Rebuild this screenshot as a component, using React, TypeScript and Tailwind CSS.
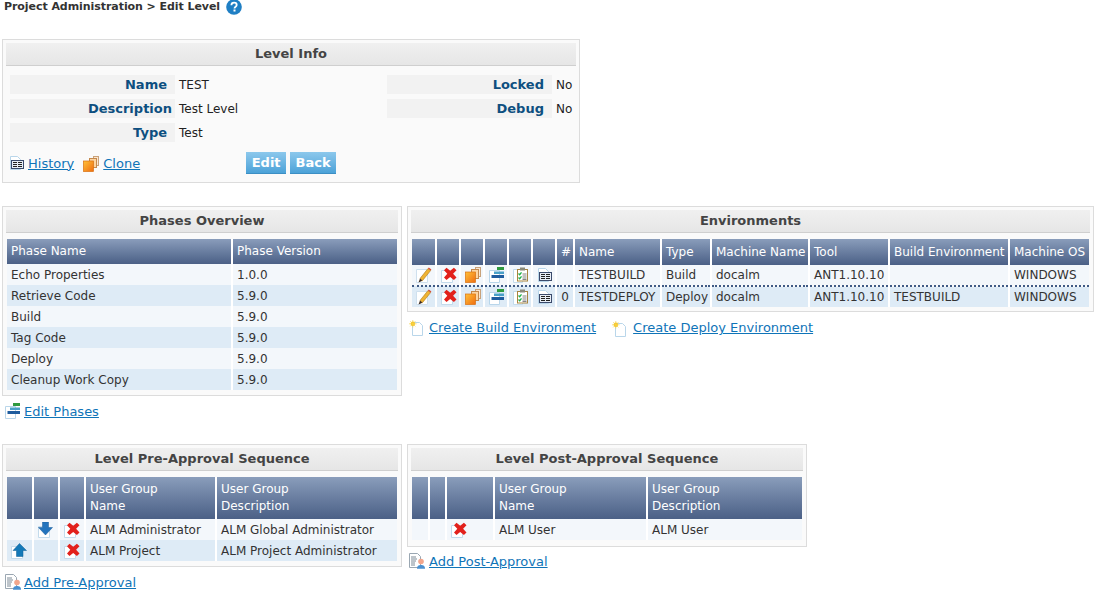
import React from "react";

const I = ({ children, w = 16, h = 16 }: { children: React.ReactNode; w?: number; h?: number }) => (
  <svg width={w} height={h} viewBox="0 0 16 16" className="inline-block shrink-0">{children}</svg>
);

const Help = () => (
  <svg width="16" height="16" viewBox="0 0 16 16" className="shrink-0">
    <circle cx="8" cy="8" r="7.8" fill="#1f7fc4" />
    <path d="M5.4 6.200c0-1.600 1.200-2.500 2.700-2.500s2.600.9 2.600 2.200c0 1.900-2.200 1.900-2.200 3.600" fill="none" stroke="#fff" strokeWidth="1.800" />
    <rect x="7.500" y="10.500" width="2" height="2" fill="#fff" />
  </svg>
);
const Book = () => (
  <I>
    <path d="M1.500 1.500h7l3 3v10h-10z" fill="#fff" stroke="#b9d6ea" />
    <rect x="2.500" y="5.500" width="12" height="8" fill="#e8eef6" stroke="#3b4a6b" />
    <rect x="4" y="7" width="4" height="5" fill="#222" />
    <rect x="9" y="7" width="4" height="5" fill="#222" />
    <path d="M4 8.500h4M4 10.500h4M9 8.500h4M9 10.500h4" stroke="#e8eef6" />
  </I>
);
const Clone = () => (
  <I>
    <rect x="10.500" y="0.500" width="5" height="9" fill="#fbe6d0" stroke="#c9a27a" />
    <rect x="6.500" y="2.500" width="7" height="9" fill="#fcd5a3" stroke="#c4894d" />
    <defs><linearGradient id="og" x1="0" y1="0" x2="1" y2="1"><stop offset="0" stopColor="#ffc23a" /><stop offset="1" stopColor="#ef6c10" /></linearGradient></defs>
    <rect x="0.500" y="5" width="10" height="10.500" fill="url(#og)" stroke="#d9700f" strokeWidth=".7" />
  </I>
);
const Pencil = () => (
  <I>
    <path d="M.5 2.500h11v13h-11z" fill="#fff" stroke="#cfe0ee" />
    <path d="M4 11.500L12 1.500l2.600 2.100L6.400 13.700z" fill="#f0b433" stroke="#a9771a" strokeWidth=".6" />
    <path d="M12 1.500l.8-1 2.600 2.100-.8 1z" fill="#d84a3a" />
    <path d="M4 11.500l-1.500 4 3.900-1.800z" fill="#3b2a20" />
  </I>
);
const Cross = () => (
  <I>
    <path d="M.5 3.500h9l2 2v10h-11z" fill="#fff" stroke="#c3dbec" />
    <path d="M5.500 .8l3.700 3 3.700-3 2.600 2.400-3.400 3.600 3.400 3.800-2.600 2.500-3.700-3.200-3.700 3.200-2.500-2.500 3.300-3.800-3.300-3.600z" fill="#e2211c" />
  </I>
);
const Phases = () => (
  <I>
    <path d="M.5 3.500h10v12h-10z" fill="#fff" stroke="#b9d6ea" />
    <rect x="8" y="0" width="7" height="3" fill="#2f9a3f" />
    <rect x="5" y="4.500" width="10" height="2.500" fill="#4aa0c8" />
    <rect x="2.500" y="8" width="12.500" height="3" fill="#1f5c9e" />
  </I>
);
const Clip = () => (
  <I>
    <path d="M.5 2.500h9v13h-9z" fill="#fff" stroke="#c3dbec" />
    <rect x="4.500" y="2.500" width="10" height="11.500" fill="#fff" stroke="#a8853f" />
    <rect x="7" y="0.500" width="5" height="3" fill="#8a8a7a" />
    <path d="M5.500 6.500l1.200 1.200 1.800-2.400M5.500 10.500l1.200 1.200 1.800-2.400" fill="none" stroke="#22b14c" strokeWidth="1.300" />
    <path d="M9.500 7h4M9.500 9h4M9.500 11h4M9.500 12.500h4" stroke="#666" strokeWidth=".8" />
  </I>
);
const NewDoc = () => (
  <I>
    <path d="M3.500 2.500h7l3 3v10h-10z" fill="#fff" stroke="#b9d6ea" />
    <circle cx="3.800" cy="3.800" r="2.200" fill="#f7c21a" />
    <path d="M3.800 0v7.600M0 3.800h7.600M1.200 1.200l5.200 5.200M6.400 1.200l-5.200 5.200" stroke="#f7d34a" strokeWidth=".7" />
  </I>
);
const Down = () => (
  <I>
    <path d="M.5 4.500h9l2 2v9h-11z" fill="#fff" stroke="#c3dbec" />
    <path d="M4.500 0h6v5.500h4l-7 7.500-7-7.500h4z" fill="#2273bd" stroke="#1b5c99" strokeWidth=".5" />
  </I>
);
const Up = () => (
  <I>
    <path d="M.5 3.500h9l2 2v10h-11z" fill="#fff" stroke="#c3dbec" />
    <path d="M8.500 .5l7 7h-3.500v6H5.500v-6H2z" fill="#1379b8" stroke="#0f5f95" strokeWidth=".5" />
  </I>
);
const AddUser = () => (
  <I>
    <path d="M.5 .5h8l3 3v11h-11z" fill="#fff" stroke="#9aa7b2" />
    <path d="M2 4h5M2 6h6M2 8h5M2 10h4M2 12h4" stroke="#7d8a96" />
    <circle cx="12" cy="8.500" r="2.800" fill="#f2a68c" />
    <path d="M8 15.800c0-3.300 2-3.800 4-3.800s4 .5 4 3.800z" fill="#4a90d0" />
  </I>
);

const Link = ({ children }: { children: React.ReactNode }) => (
  <a className="text-[13px] leading-[15px] text-[#0f74b8] underline cursor-pointer whitespace-nowrap">{children}</a>
);

const Panel = ({ title, w, children }: { title: string; w: string; children: React.ReactNode }) => (
  <div className={`${w} border border-[#dcdcdc] bg-[#fafafa] p-[3px] shrink-0`}>
    <div className="h-[23px] flex items-center justify-center bg-gradient-to-b from-[#f0f0f0] to-[#e6e6e6] border-b border-[#cfcfcf] text-[13px] font-bold text-[#444]">
      {title}
    </div>
    {children}
  </div>
);

const Th = ({ children, cls = "" }: { children?: React.ReactNode; cls?: string }) => (
  <th className={`border-r-2 last:border-r-0 border-white bg-gradient-to-b from-[#8a9dbb] to-[#4b6086] text-white font-normal text-left align-middle px-1 leading-[17px] text-[12px] ${cls}`}>{children}</th>
);
const Td = ({ children, cls = "" }: { children?: React.ReactNode; cls?: string }) => (
  <td className={`border-r-2 last:border-r-0 border-white px-1 text-[12px] text-[#333] whitespace-nowrap overflow-hidden ${cls}`}>{children}</td>
);
const IconTd = ({ children }: { children?: React.ReactNode }) => (
  <td className="border-r-2 border-white align-middle p-0">
    <span className="flex items-center pl-[4px]">{children}</span>
  </td>
);

const Table = ({ cols, children, w }: { cols: number[]; children: React.ReactNode; w: string }) => (
  <table className={`table-fixed border-collapse ${w}`}>
    <colgroup>{cols.map((c, i) => <col key={i} style={{ width: c }} />)}</colgroup>
    {children}
  </table>
);

const Info = ({ label, value, pr = "pr-[8px]" }: { label: string; value: string; pr?: string }) => (
  <div className="flex h-[19px] items-center">
    <div className={`w-[165px] h-full bg-[#f2f2f2] text-right ${pr} text-[13px] leading-[19px] font-bold text-[#0d4f80]`}>{label}</div>
    <div className="pl-[4px] text-[12px] text-[#222]">{value}</div>
  </div>
);

const phases = [
  ["Echo Properties", "1.0.0"],
  ["Retrieve Code", "5.9.0"],
  ["Build", "5.9.0"],
  ["Tag Code", "5.9.0"],
  ["Deploy", "5.9.0"],
  ["Cleanup Work Copy", "5.9.0"],
];
const envs = [
  ["", "TESTBUILD", "Build", "docalm", "ANT1.10.10", "", "WINDOWS"],
  ["0", "TESTDEPLOY", "Deploy", "docalm", "ANT1.10.10", "TESTBUILD", "WINDOWS"],
];

export default function App() {
  return (
    <div className="w-[1099px] h-[599px] overflow-hidden bg-white text-[12px] text-[#333]" style={{ fontFamily: '"DejaVu Sans", Verdana, sans-serif' }}>
      <div className="flex items-center h-[14px] pl-[4px] gap-[6px] text-[11px] font-bold text-[#333]">
        <span className="tracking-[-0.06px]">Project Administration &gt; Edit Level</span>
        <Help />
      </div>

      <div className="mt-[25px] ml-[2px]">
        <Panel title="Level Info" w="w-[578px]">
          <div className="flex mt-[9px] pl-[4px]">
            <div className="w-[377px] flex flex-col gap-[5px]">
              <Info label="Name" value="TEST" />
              <Info label="Description" value="Test Level" pr="pr-[3px]" />
              <Info label="Type" value="Test" />
            </div>
            <div className="flex flex-col gap-[5px]">
              <Info label="Locked" value="No" />
              <Info label="Debug" value="No" />
            </div>
          </div>
          <div className="flex items-center h-[22px] mt-[10px] mb-[5px] pl-[3px]">
            <Book />
            <span className="ml-[3px] mt-[1px]"><Link>History</Link></span>
            <span className="ml-[9px]"><Clone /></span>
            <span className="ml-[4px] mt-[1px]"><Link>Clone</Link></span>
            <div className="flex gap-[4px] ml-[106px]">
              <button className="w-[40px] h-[22px] bg-gradient-to-b from-[#8cc8ec] to-[#4ba2d8] border-b border-[#3c8fc4] text-white font-bold text-[13px]">Edit</button>
              <button className="w-[46px] h-[22px] bg-gradient-to-b from-[#8cc8ec] to-[#4ba2d8] border-b border-[#3c8fc4] text-white font-bold text-[13px]">Back</button>
            </div>
          </div>
        </Panel>
      </div>

      <div className="flex gap-[5px] ml-[2px] mt-[23px] items-start">
        <div className="w-[400px] shrink-0">
          <Panel title="Phases Overview" w="w-[400px]">
            <div className="mt-[6px] px-px pb-[2px]">
              <Table cols={[225, 165]} w="w-[390px]">
                <thead><tr className="h-[25px]"><Th>Phase Name</Th><Th>Phase Version</Th></tr></thead>
                <tbody>
                  {phases.map((p, i) => (
                    <tr key={p[0]} className={`h-[21px] ${i % 2 ? "bg-[#deebf6]" : "bg-[#f3f7fb]"}`}><Td>{p[0]}</Td><Td>{p[1]}</Td></tr>
                  ))}
                </tbody>
              </Table>
            </div>
          </Panel>
          <div className="flex items-center gap-[3px] mt-[7px] ml-[3px] h-[16px]"><Phases /><Link>Edit Phases</Link></div>
        </div>

        <div className="w-[687px] shrink-0">
          <Panel title="Environments" w="w-[687px]">
            <div className="mt-[6px] px-px pb-[1px]">
              <Table cols={[24, 24, 24, 24, 24, 24, 18, 87, 50, 98, 80, 120, 80]} w="w-[677px]">
                <thead>
                  <tr className="h-[26px]">
                    <Th /><Th /><Th /><Th /><Th /><Th />
                    <Th cls="font-bold text-center">#</Th>
                    <Th>Name</Th><Th>Type</Th><Th cls="whitespace-nowrap">Machine Name</Th><Th>Tool</Th><Th cls="whitespace-nowrap">Build Environment</Th><Th cls="whitespace-nowrap">Machine OS</Th>
                  </tr>
                </thead>
                <tbody>
                  {envs.map((e, i) => (
                    <tr key={e[1]} className={`h-[21px] ${i ? "bg-[#deebf6] border-t-2 border-dotted border-[#3f5a85]" : "bg-[#f3f7fb]"}`}>
                      <IconTd><Pencil /></IconTd>
                      <IconTd><Cross /></IconTd>
                      <IconTd><Clone /></IconTd>
                      <IconTd><Phases /></IconTd>
                      <IconTd><Clip /></IconTd>
                      <IconTd><Book /></IconTd>
                      {e.map((c, j) => <Td key={j} cls={j === 0 ? "text-center" : ""}>{c}</Td>)}
                    </tr>
                  ))}
                </tbody>
              </Table>
            </div>
          </Panel>
          <div className="flex items-center mt-[8px] ml-[2px] h-[16px]">
            <NewDoc />
            <span className="ml-[4px]"><Link>Create Build Environment</Link></span>
            <span className="ml-[16px]"><NewDoc /></span>
            <span className="ml-[5px]"><Link>Create Deploy Environment</Link></span>
          </div>
        </div>
      </div>

      <div className="flex gap-[5px] ml-[2px] mt-[25px] items-start">
        <div className="w-[400px] shrink-0">
          <Panel title="Level Pre-Approval Sequence" w="w-[400px]">
            <div className="mt-[6px] px-px pb-[2px]">
              <Table cols={[26, 26, 26, 131, 181]} w="w-[390px]">
                <thead><tr className="h-[42px]"><Th /><Th /><Th /><Th>User Group<br />Name</Th><Th>User Group<br />Description</Th></tr></thead>
                <tbody>
                  <tr className="h-[21px] bg-[#f3f7fb]"><IconTd /><IconTd><Down /></IconTd><IconTd><Cross /></IconTd><Td>ALM Administrator</Td><Td>ALM Global Administrator</Td></tr>
                  <tr className="h-[21px] bg-[#deebf6]"><IconTd><Up /></IconTd><IconTd /><IconTd><Cross /></IconTd><Td>ALM Project</Td><Td>ALM Project Administrator</Td></tr>
                </tbody>
              </Table>
            </div>
          </Panel>
          <div className="flex items-center gap-[3px] mt-[7px] ml-[3px] h-[16px]"><AddUser /><Link>Add Pre-Approval</Link></div>
        </div>
        <div className="w-[400px] shrink-0">
          <Panel title="Level Post-Approval Sequence" w="w-[400px]">
            <div className="mt-[6px] px-px pb-[3px]">
              <Table cols={[17, 17, 48, 153, 155]} w="w-[390px]">
                <thead><tr className="h-[42px]"><Th /><Th /><Th /><Th>User Group<br />Name</Th><Th>User Group<br />Description</Th></tr></thead>
                <tbody>
                  <tr className="h-[21px] bg-[#f3f7fb]"><IconTd /><IconTd /><IconTd><Cross /></IconTd><Td>ALM User</Td><Td>ALM User</Td></tr>
                </tbody>
              </Table>
            </div>
          </Panel>
          <div className="flex items-center gap-[4px] mt-[6px] ml-[2px] h-[16px]"><AddUser /><Link>Add Post-Approval</Link></div>
        </div>
      </div>
    </div>
  );
}
